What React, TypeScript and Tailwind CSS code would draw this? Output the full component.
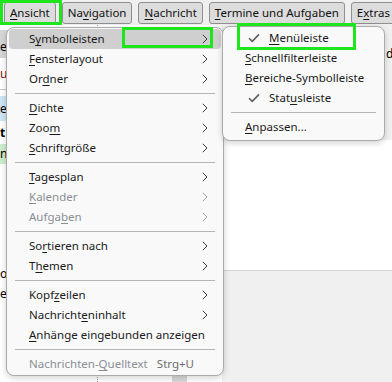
import React from "react";

type MenuItemProps = {
  pre: string;
  k: string;
  post: string;
  sub?: boolean;
  disabled?: boolean;
  active?: boolean;
  shortcut?: string;
  check?: boolean;
  checkCol?: boolean;
};

function Chevron() {
  return (
    <svg width="6" height="10" viewBox="0 0 6 10" className="shrink-0">
      <path d="M0.8 0.8 L5 5 L0.8 9.2" fill="none" stroke="currentColor" strokeWidth="1" />
    </svg>
  );
}

function Check() {
  return (
    <svg width="12" height="10" viewBox="0 0 12 10" className="shrink-0">
      <path d="M1 5.2 L4.3 8.4 L11 1.4" fill="none" stroke="#5e5e5e" strokeWidth="1.6" />
    </svg>
  );
}

function Label({ pre, k, post }: { pre: string; k: string; post: string }) {
  return (
    <span className="whitespace-nowrap">
      {pre}
      <span className="underline underline-offset-[2px] decoration-1">{k}</span>
      {post}
    </span>
  );
}

function MenuItem({ pre, k, post, sub, disabled, active, shortcut, check, checkCol }: MenuItemProps) {
  return (
    <div
      className={`flex h-[20px] items-center rounded-[4px] pl-[20px] pr-[13px] ${active ? "bg-[#cfcfcf]" : ""} ${
        disabled ? "text-[#8a8e96]" : "text-[#1a1a1a]"
      }`}
    >
      {checkCol && <span className="ml-[3px] mr-[10px] flex w-[11px]">{check && <Check />}</span>}
      <Label pre={pre} k={k} post={post} />
      <span className="flex-1" />
      {shortcut && <span className="mr-[14px] text-[#6e6e6e]">{shortcut}</span>}
      {sub && <span className={disabled ? "text-[#a0a0a0]" : "text-[#3a3a3a]"}><Chevron /></span>}
    </div>
  );
}

function Sep() {
  return (
    <div className="flex h-[9px] items-center">
      <div className="mx-[6px] h-px flex-1 bg-[#b5b5b5]" />
    </div>
  );
}

function BarButton({ pre, k, post, last }: { pre: string; k: string; post: string; last?: boolean }) {
  return (
    <div
      className={`flex h-[22px] shrink-0 items-center rounded-[3px] border border-[#8f8f8f] bg-[#dcdcdc] pl-[5px] text-[11.5px] text-[#111] ${
        last ? "pr-[12px]" : "pr-[5px]"
      }`}
    >
      <Label pre={pre} k={k} post={post} />
    </div>
  );
}

export default function App() {
  return (
    <div
      className="relative h-[382px] w-[392px] overflow-hidden bg-white text-[11.5px]"
      style={{ fontFamily: '"Noto Sans", "Segoe UI", sans-serif' }}
    >
      {/* Menu bar */}
      <div className="flex h-[25px] items-center gap-[6px] overflow-hidden bg-[#f0f0f0] pl-[4px]">
        <BarButton pre="" k="A" post="nsicht" />
        <BarButton pre="Na" k="v" post="igation" />
        <BarButton pre="" k="N" post="achricht" />
        <BarButton pre="" k="T" post="ermine und Aufgaben" />
        <BarButton pre="E" k="x" post="tras" last />
      </div>

      {/* Window content behind the menus */}
      <div className="flex h-[357px]">
        <div className="flex w-[98px] flex-col border-r border-dotted border-[#9a9a9a] text-[12px]">
          <div className="h-[5px]" />
          <div className="flex h-[28px] items-end bg-[#d6d6d6] pb-[2px]">e</div>
          <div className="flex h-[32px] items-center border-b border-[#c8c8c8] text-[#7a1020]">u</div>
          <div className="h-[6px]" />
          <div className="flex h-[25px] items-center bg-[#cde6f5]">e</div>
          <div className="flex h-[23px] items-center font-bold">t</div>
          <div className="flex h-[20px] items-center bg-[#cdeccd]">n</div>
          <div className="h-[100px]" />
          <div className="flex h-[20px] items-center">o</div>
          <div className="flex h-[20px] items-center">e</div>
        </div>
        <div className="flex w-[124px] flex-col justify-end">
          <div className="ml-[74px] h-[12px] w-[15px] bg-[#d9d9d9]" />
        </div>
        <div className="flex flex-1 flex-col">
          <div className="flex h-[115px] justify-end bg-[#f0f0f0] pt-[20px] text-[12px]">
            <span className="w-[6px] overflow-hidden">d</span>
          </div>
          <div className="h-[130px] bg-white" />
          <div className="flex-1 border-t border-[#d4d4d4] bg-[#f0f0f0]" />
        </div>
      </div>

      {/* Main dropdown */}
      <div className="absolute left-[6px] top-[27px] w-[218px] rounded-[8px] border border-[#ababab] bg-[#f9f9f9] px-[2px] py-px shadow-[0_2px_6px_rgba(0,0,0,0.18)]">
        <MenuItem pre="S" k="y" post="mbolleisten" sub active />
        <MenuItem pre="" k="F" post="ensterlayout" sub />
        <MenuItem pre="Or" k="d" post="ner" sub />
        <Sep />
        <MenuItem pre="" k="D" post="ichte" sub />
        <MenuItem pre="Zoo" k="m" post="" sub />
        <MenuItem pre="" k="S" post="chriftgröße" sub />
        <Sep />
        <MenuItem pre="" k="T" post="agesplan" sub />
        <MenuItem pre="" k="K" post="alender" sub disabled />
        <MenuItem pre="Aufga" k="b" post="en" sub disabled />
        <Sep />
        <MenuItem pre="So" k="r" post="tieren nach" sub />
        <MenuItem pre="T" k="h" post="emen" sub />
        <Sep />
        <MenuItem pre="Kopf" k="z" post="eilen" sub />
        <MenuItem pre="Nachricht" k="e" post="ninhalt" sub />
        <MenuItem pre="" k="A" post="nhänge eingebunden anzeigen" />
        <Sep />
        <MenuItem pre="Nachrichten-" k="Q" post="uelltext" shortcut="Strg+U" disabled />
      </div>

      {/* Submenu */}
      <div className="absolute left-[222px] top-[26px] w-[163px] rounded-[8px] border border-[#ababab] bg-[#f9f9f9] px-[2px] pb-[3px] pt-px shadow-[0_2px_6px_rgba(0,0,0,0.18)]">
        <MenuItem pre="" k="M" post="enüleiste" checkCol check />
        <MenuItem pre="" k="S" post="chnellfilterleiste" />
        <MenuItem pre="" k="B" post="ereiche-Symbolleiste" />
        <MenuItem pre="Stat" k="u" post="sleiste" checkCol check />
        <Sep />
        <MenuItem pre="" k="A" post="npassen..." />
      </div>

      {/* Green highlight marks */}
      <div className="pointer-events-none absolute left-0 top-0 h-[25px] w-[62px] border-[3px] border-[#1fe51f]" />
      <div className="pointer-events-none absolute left-[122px] top-[27px] h-[21px] w-[91px] border-[3px] border-[#1fe51f]" />
      <div className="pointer-events-none absolute left-[237px] top-[23px] h-[27px] w-[119px] border-[3px] border-[#1fe51f]" />
    </div>
  );
}
